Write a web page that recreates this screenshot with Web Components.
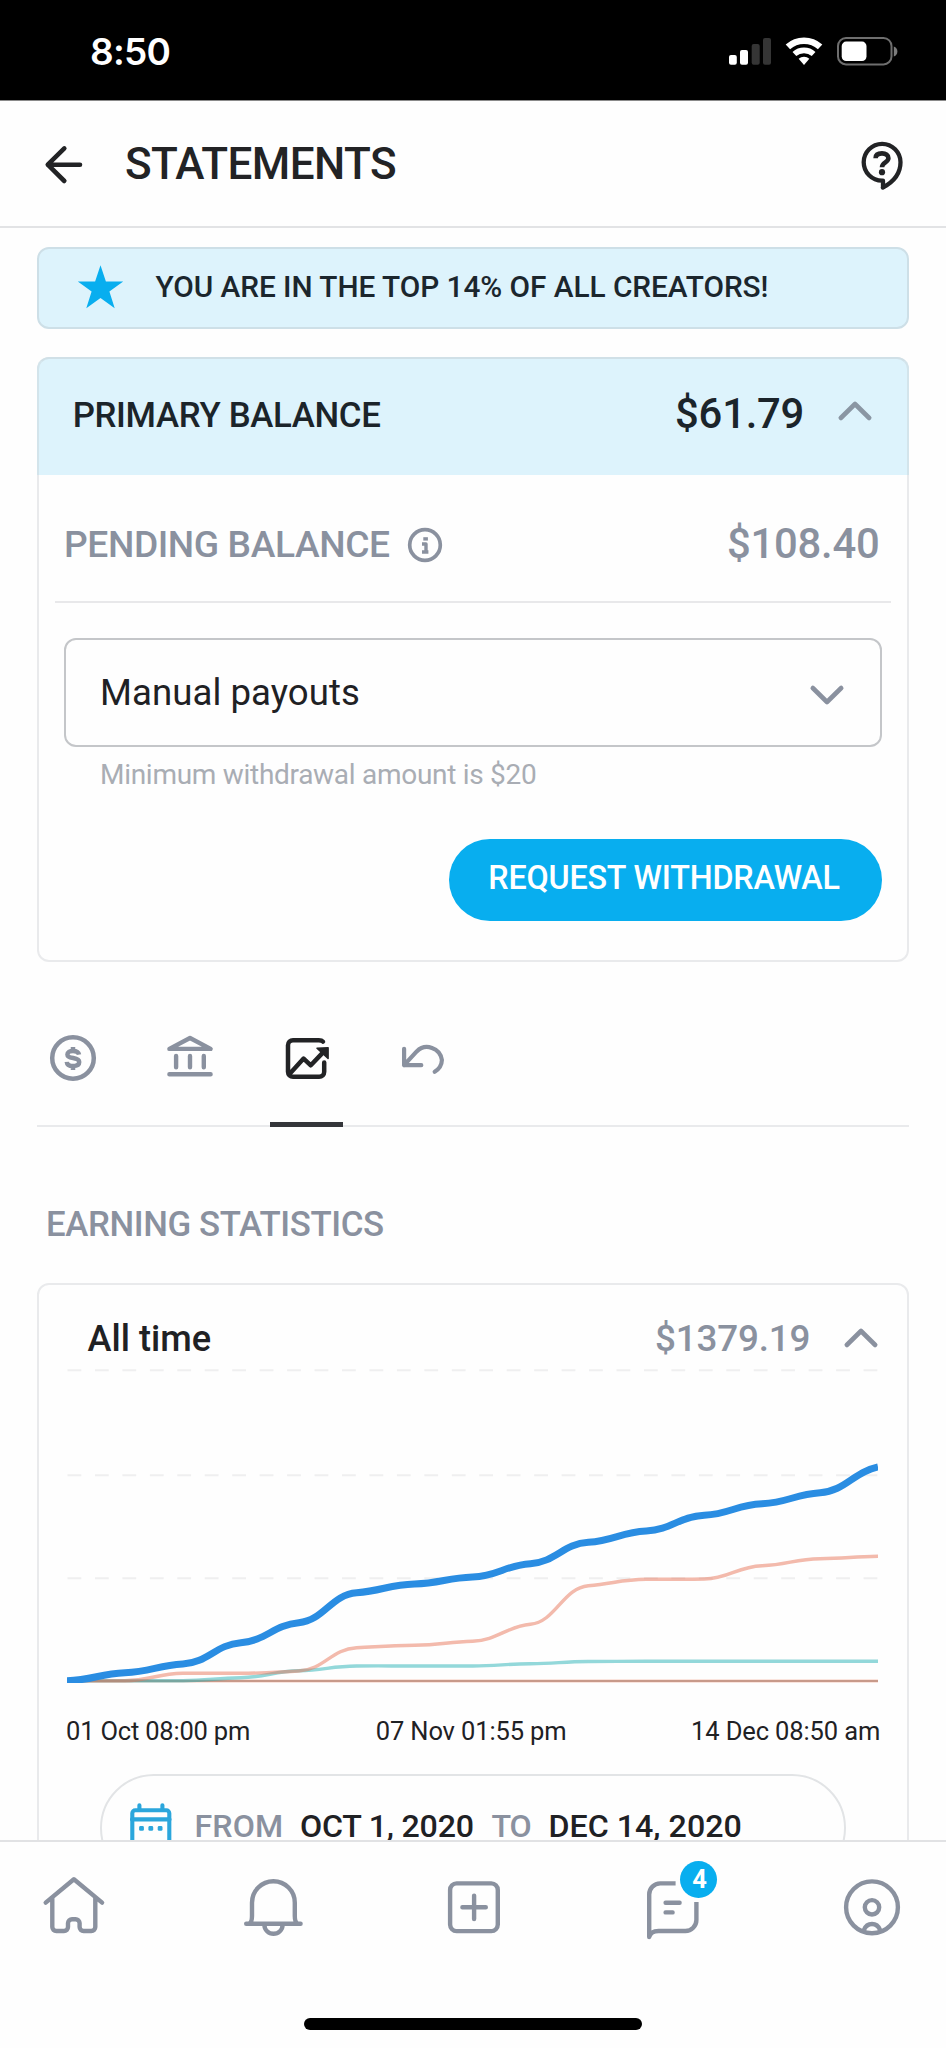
<!DOCTYPE html>
<html lang="en">
<head>
<meta charset="utf-8">
<title>Statements</title>
<style>
body{margin:0;background:#fefefe;font-family:Roboto,"Liberation Sans",sans-serif;color:#1f2124}
</style>
</head>
<body>
<statements-app></statements-app>
<script>
const define = (name, html, init) => {
  const t = document.createElement('template');
  t.innerHTML = html;
  customElements.define(name, class extends HTMLElement {
    constructor(){ super(); this.attachShadow({mode:'open'}).append(t.content.cloneNode(true)); }
    connectedCallback(){ if (init) init.call(this, this.shadowRoot); }
  });
};

/* A line of text whose letters are tracked so that its ink fills exactly `w` pixels. */
const ctx = document.createElement('canvas').getContext('2d');
define('track-text', `<style>:host{display:block;flex:none;white-space:pre;line-height:1.2}span{display:block}</style><span><slot></slot></span>`,
function(root){
  const s = this.getAttribute('size'), wt = this.getAttribute('weight') || 500;
  const fam = this.getAttribute('family') || 'Roboto', w = +this.getAttribute('w');
  const txt = this.textContent, span = root.querySelector('span');
  ctx.font = `${wt} ${s}px ${fam}`;
  const m = ctx.measureText(txt);
  const ink = m.actualBoundingBoxLeft + m.actualBoundingBoxRight;
  span.style.font = `${wt} ${s}px/1.2 ${fam}, "Liberation Sans", sans-serif`;
  if (txt.length > 1) span.style.letterSpacing = (w - ink) / (txt.length - 1) + 'px';
  span.style.marginLeft = m.actualBoundingBoxLeft + 'px';
  this.style.width = w + 'px';
});

/* Icons: [viewBox, stroke width, markup] */
const ICONS = {
  signal:['729 35 43 32',0,'<g fill="#fff" stroke="none"><rect x="729" y="55" width="7.8" height="9.8" rx="2"/><rect x="740" y="50" width="8" height="14.8" rx="2"/><g fill="#353535"><rect x="751.7" y="44" width="8" height="20.8" rx="2"/><rect x="763" y="38" width="8" height="26.8" rx="2"/></g></g>'],
  wifi:['784 35 40 32',6.6,'<g stroke-linecap="butt"><path d="M787.9 46.9A24 24 0 0 1 820.1 46.9"/><path stroke-width="5.6" d="M794.4 54A14.4 14.4 0 0 1 813.6 54"/></g><path fill="#fff" stroke="none" d="M798.65 58.8A8 8 0 0 1 809.35 58.8L804 64.9Z"/>'],
  battery:['836 35 63 32',2,'<rect x="838" y="38" width="53.5" height="26.4" rx="8" stroke="#6e6e6e"/><rect x="841.7" y="41.6" width="24.8" height="19.4" rx="4.5" fill="#fff" stroke="none"/><path d="M893.8 46.4q3.6 1.4 3.6 5t-3.6 5z" fill="#7c7c7c" stroke="none"/>'],
  back:['43 143 42 43',4.6,'<path d="M80 164.7H47.8M64.3 148.4L47.8 164.7 64.3 181"/>'],
  help:['858 138 48 56',4.3,'<path d="M882.8 187.6C893.5 182 900.5 174 900.5 162.3A18.4 18.4 0 1 0 882.1 180.7H883V187.6"/><path stroke-linecap="butt" stroke-width="4.6" d="M875.6 158.2C875.6 155 878.2 153.4 882 153.4S888.4 155.2 888.4 158.2C888.4 162.4 882 162.4 882 167.2"/><circle cx="882" cy="172.2" r="3.1" fill="currentColor" stroke="none"/>'],
  star:['77 263 47 46',0,'<path fill="#08aeef" stroke="none" d="M100.5 264.3L105.9 280.6H123.2L109.4 290.6 114.7 307.2 100.5 297.1 86.3 307.2 91.6 290.6 77.8 280.6H95.1Z"/>'],
  up:['0 0 36 24',4.6,'<path d="M3.8 18L18 4 32.2 18"/>'],
  down:['0 0 36 24',4.6,'<path d="M3.8 4L18 18 32.2 4"/>'],
  info:['407 526 36 36',3.7,'<circle cx="425" cy="544" r="15.3"/><path stroke-linecap="butt" stroke-width="3.4" d="M422 543H426V551M422 551H428.4"/><rect x="423.3" y="536.2" width="4.6" height="3.4" fill="currentColor" stroke="none"/>'],
  dollar:['48 1033 50 50',4.5,'<circle cx="73" cy="1058" r="20.8"/><path stroke-linecap="butt" d="M79 1054.6C78.6 1052 76.4 1050.9 73 1050.9 69.6 1050.9 67.4 1052.3 67.4 1054.4 67.4 1059.5 79.2 1056.6 79.2 1062 79.2 1064.6 76.6 1066 73 1066 69.2 1066 67 1064.5 66.8 1061.8M73 1047V1051M73 1066V1070"/>'],
  bank:['164.7 1033 50 50',4.4,'<path d="M169.1 1048.9L189.7 1038 210.3 1048.9ZM169.1 1074.3H210.3"/><path d="M175.8 1056V1067.3M189.7 1056V1067.3M203.5 1056V1067.3"/>'],
  chart:['281.2 1033 50 50',4.5,'<path d="M323.2 1041.6Q322 1040.2 319 1040.2H293.2A5 5 0 0 0 288.2 1045.2V1071.8A5 5 0 0 0 293.2 1076.8H319.4A5 5 0 0 0 324.4 1071.8V1062.6M290.2 1073.4L303.8 1058.6 311 1065.3 324 1051.6"/><path d="M317.2 1048.2L328.3 1047.7V1058.4Z" fill="currentColor" stroke-width="1.5"/>'],
  undo:['397.9 1033 50 50',4.2,'<path d="M404 1048.8V1065.2H421.2M404 1065.2L416.6 1051.4A14.9 14.9 0 0 1 441.8 1060Q441.6 1067.4 434.6 1071.8"/>'],
  calendar:['128 1801 46 52',4.1,'<rect x="132.3" y="1810.3" width="37" height="38" rx="3"/><path d="M132 1819.4H169.5M139.4 1805.3V1809M162.4 1805.3V1809"/><g fill="currentColor" stroke="none"><rect x="139.1" y="1826" width="4.8" height="4.8" rx="1.4"/><rect x="148.4" y="1826" width="4.8" height="4.8" rx="1.4"/><rect x="157.7" y="1826" width="4.8" height="4.8" rx="1.4"/></g>'],
  home:['38.5 1866 72 80',4.4,'<path d="M46.2 1902.6L74.4 1879.3 102.6 1902.6M52.8 1898V1927A4 4 0 0 0 56.8 1931H64.5A4 4 0 0 0 68.5 1927V1923A4 4 0 0 1 72.5 1919.2H76.1A4 4 0 0 1 80.1 1923V1927A4 4 0 0 0 84.1 1931H91.8A4 4 0 0 0 95.8 1927V1898"/>'],
  bell:['237.8 1866 72 80',4.4,'<path d="M246 1923.8H300.4M249.3 1923.4Q251.8 1922 251.8 1916V1902.7A21.4 21.4 0 0 1 294.6 1902.7V1916Q294.6 1922 297.1 1923.4M264.2 1925A9.1 8.8 0 0 0 282.4 1925"/>'],
  plus:['437.1 1866 72 80',4.4,'<rect x="450.2" y="1883.4" width="47.7" height="47.7" rx="6.5"/><path d="M462.5 1907.3H485.9M474.2 1895.6V1919"/>'],
  chat:['636.4 1866 72 80',4.4,'<path stroke-linecap="butt" d="M676 1883.4H660.6A11 11 0 0 0 649.6 1894.4V1937Q651 1931 659 1931H685.8A11 11 0 0 0 696.8 1920V1902"/><path d="M666 1902.8H680M666 1912.4H673"/>'],
  user:['835.7 1866 72 80',4.4,'<circle cx="871.7" cy="1907.3" r="25.9"/><circle cx="871.7" cy="1907.3" r="7.2"/><path d="M863.6 1930Q866 1924 871.7 1924T879.8 1930"/>']
};
define('line-icon', `<style>:host{display:block;flex:none}svg{display:block;fill:none;stroke:currentColor;stroke-linecap:round;stroke-linejoin:round}</style>`,
function(root){
  const [vb, sw, body] = ICONS[this.getAttribute('name')];
  const [, , w, h] = vb.split(' ');
  root.innerHTML += `<svg width="${w}" height="${h}" viewBox="${vb}" stroke-width="${sw}">${body}</svg>`;
});

define('status-bar', `<style>
:host{display:flex;box-sizing:border-box;height:100px;background:#000;border-bottom:1px solid #000;box-shadow:0 1px 0 #8a8a8a;color:#fff;padding:2px 47px 0 91px;align-items:center}
track-text{margin-top:3px}
.r{margin-left:auto;display:flex;gap:12px}</style>
<track-text family="Inter" weight="600" size="37" w="78.5">8:50</track-text>
<div class="r"><line-icon name="signal"></line-icon><line-icon name="wifi"></line-icon><line-icon name="battery"></line-icon></div>`);

define('page-header', `<style>
:host{display:flex;box-sizing:border-box;height:128px;border-bottom:2px solid #e2e3e5;padding:0 40px 0 43px;align-items:center;color:#222325}
track-text{margin:2px 0 0 41px}.b{margin-top:3px}.h{margin:6px 0 0 auto}</style>
<line-icon class="b" name="back"></line-icon><track-text size="44" w="265.5"><slot></slot></track-text><line-icon class="h" name="help"></line-icon>`.replace('<slot></slot>', 'STATEMENTS').replace('w="265.5"', 'w="270"'));

define('rank-banner', `<style>
:host{display:flex;box-sizing:border-box;height:82px;margin:19px 37px 0;border:2px solid #cddfe7;border-radius:12px;background:#ddf3fc;padding-left:38px;align-items:center;color:#1b262d}
line-icon{margin-top:-3px}track-text{margin:-2px 0 0 31.5px}</style>
<line-icon name="star"></line-icon><track-text size="29.8" w="613.5">YOU ARE IN THE TOP 14% OF ALL CREATORS!</track-text>`);

define('balance-card', `<style>
:host{display:block;box-sizing:border-box;height:605px;margin:28px 37px 0;border-radius:12px;box-shadow:inset 0 0 0 2px #e9eaec}
.row{display:flex;align-items:center;box-sizing:border-box}
.head{height:118px;background:#ddf3fc;border:2px solid #d0e0e7;border-bottom:0;border-left-color:#d3e4eb;border-right-color:#d3e4eb;border-radius:12px 12px 0 0;padding:0 34.5px 0 35.7px;color:#1b242a}
.head .p{margin-top:-2px}
.amt{margin:-5px 34px 0 auto}.head line-icon{color:#8a96a3;margin-top:-10px}
.pend{height:128px;margin:0 18px;padding:13px 13px 0 11px;border-bottom:2px solid #e8e8ea;color:#8a919f}
.pend line-icon{margin-left:18px}.pend .a{margin-left:auto;margin-top:-1px}
.sel{height:109px;margin:35px 27px 0;border:2px solid #c4c6c9;border-radius:12px;padding:0 34.7px 0 37px}
.sel track-text{margin-top:0}
.sel line-icon{margin-left:auto;color:#8a919f;margin-top:6px}
.note{color:#a9adb4;margin:11px 0 0 65px}
.act{justify-content:flex-end;margin:47.5px 27px 0}
button{all:unset;box-sizing:border-box;display:flex;align-items:center;justify-content:center;width:433.5px;height:82px;border-radius:41px;background:#08aeef;color:#fff;padding-bottom:3px}
</style>
<div class="row head"><track-text class="p" size="34.8" w="305.5">PRIMARY BALANCE</track-text><track-text class="amt" size="41.8" w="125.4">$61.79</track-text><line-icon name="up"></line-icon></div>
<div class="row pend"><track-text size="37.2" w="323">PENDING BALANCE</track-text><line-icon name="info"></line-icon><track-text class="a" size="41.8" w="149">$108.40</track-text></div>
<div class="row sel"><track-text size="36.6" weight="400" w="256">Manual payouts</track-text><line-icon name="down"></line-icon></div>
<track-text class="note" size="28" weight="400" w="434">Minimum withdrawal amount is $20</track-text>
<div class="row act"><button><track-text size="32.3" w="350">REQUEST WITHDRAWAL</track-text></button></div>`);

define('statement-tabs', `<style>
:host{display:flex;box-sizing:border-box;height:165px;margin:0 37px;gap:43.6px;border-bottom:2px solid #e9eaec;color:#8a919f;align-items:stretch}
div{width:73px;display:flex;justify-content:center;padding:71px .8px 0 0;box-sizing:border-box;flex:none;margin-bottom:-2px}
.on{color:#222325;border-bottom:5px solid #34363a}</style>
<div><line-icon name="dollar"></line-icon></div><div><line-icon name="bank"></line-icon></div><div class="on"><line-icon name="chart"></line-icon></div><div><line-icon name="undo"></line-icon></div>`);

define('earnings-chart', `<style>:host{display:block}svg{display:block}</style>`, function(root){
  const n = 15, dx = 811 / 14;
  const total = [1680.7,1672.7,1664,1642.7,1622.7,1592.7,1584,1577,1563.7,1542.3,1531,1515.3,1503.7,1492.7,1467];
  const tips = [1680.7,1680.7,1673.3,1673.3,1671,1647.7,1645.3,1641.2,1624.3,1585.7,1579.3,1579,1565.7,1558.7,1556.3];
  const subs = [1680.7,1680.7,1680.7,1677.7,1670.7,1666,1666,1666,1663.7,1661.5,1661.3,1661.3,1661.3,1661.3,1661.3];
  const curve = y => {
    const m = y.map((v,i) => i && i < n-1 ? .22*(y[i+1]-y[i-1])/(2*dx) : (i ? .5*(y[i]-y[i-1])/dx : .1*(y[1]-y[0])/dx));
    let d = `M67 ${y[0]}`;
    for (let i = 1; i < n; i++) {
      const a = 67+dx*(i-1), b = 67+dx*i, h = dx*.44;
      d += `C${a+h} ${y[i-1]+m[i-1]*h} ${b-h} ${y[i]-m[i]*h} ${b} ${y[i]}`;
    }
    return d;
  };
  root.innerHTML += `<svg width="811" height="315" viewBox="67 1368 811 315" fill="none">
    <path d="M67.5 1370.2H878M67.5 1475.3H878M67.5 1578.3H878" stroke="#efeff0" stroke-width="2" stroke-dasharray="13.8 13.65"/>
    <path d="M67 1681H878" stroke="#f5c9bb" stroke-width="3"/><path d="M67 1681H878" stroke="#b98a7a" stroke-width="1.3"/>
    <path d="${curve(subs)}" stroke="#27b1b5" stroke-opacity=".5" stroke-width="3.4"/>
    <path d="${curve(tips)}" stroke="#e8765a" stroke-opacity=".5" stroke-width="3.4"/>
    <path d="${curve(total)}" stroke="#2a8de2" stroke-width="7"/></svg>`;
});

define('earnings-card', `<style>
:host{display:block;box-sizing:border-box;height:640px;margin:0 37px;border:2px solid #e9eaec;border-radius:12px}
.head{display:flex;align-items:center;height:83px;box-sizing:border-box;padding:25px 28px 0 48.5px}
.head .a{margin-left:auto;color:#8a919f}.head line-icon{margin-left:34.5px;color:#8a919f}
earnings-chart{margin-left:28px}
.dates{display:flex;justify-content:space-between;margin:33.5px 28px 0 28px}
.range{display:flex;align-items:center;box-sizing:border-box;width:746px;height:108px;margin:27px 0 0 61px;border:2px solid #e2e4e6;border-radius:54px;padding:0 0 2px 25.5px}
.range line-icon{color:#2ba6dc;margin-top:0;margin-right:23px}.range track-text{margin-top:-1.5px}.g{color:#8a919f}.m{margin:0 18px 0 20px}</style>
<div class="head"><track-text size="36.2" w="123.2">All time</track-text><track-text class="a" size="36.8" w="152.5">$1379.19</track-text><line-icon name="up"></line-icon></div>
<earnings-chart></earnings-chart>
<div class="dates"><track-text size="25.5" weight="400" w="182">01 Oct 08:00 pm</track-text><track-text size="25.5" weight="400" w="188.5">07 Nov 01:55 pm</track-text><track-text size="25.5" weight="400" w="186">14 Dec 08:50 am</track-text></div>
<div class="range"><line-icon name="calendar"></line-icon><track-text class="g" size="32.2" w="84.5">FROM</track-text><track-text class="m" size="32.2" w="172.5">OCT 1, 2020</track-text><track-text class="g" size="32.2" w="39">TO</track-text><track-text class="m" size="32.2" w="190">DEC 14, 2020</track-text></div>`);

define('bottom-nav', `<style>
:host{display:block;box-sizing:border-box;height:208px;border-top:2px solid #e1e2e4;background:#fefefe}
nav{display:flex;justify-content:space-between;padding:24px 38.3px 0 38.4px;color:#8a919f}
.c{position:relative}.n{position:absolute;left:44px;top:-5.5px;width:37px;height:37px;border-radius:50%;background:#08aeef;color:#fff;display:flex;align-items:center;justify-content:center}
i{display:block;width:338px;height:12px;border-radius:6px;background:#000;margin:72px 0 0 304px}</style>
<nav><line-icon name="home"></line-icon><line-icon name="bell"></line-icon><line-icon name="plus"></line-icon><div class="c"><line-icon name="chat"></line-icon><div class="n"><track-text size="25.5" weight="700" w="13.5">4</track-text></div></div><line-icon name="user"></line-icon></nav><i></i>`);

define('statements-app', `<style>
:host{display:flex;flex-direction:column;height:2048px;overflow:hidden}
status-bar,page-header,bottom-nav{flex:none}
main{flex:1;min-height:0;overflow:hidden;display:flow-root}
.t{color:#8a919f;margin:77px 0 37px 48px}</style>
<status-bar></status-bar><page-header></page-header>
<main><rank-banner></rank-banner><balance-card></balance-card><statement-tabs></statement-tabs>
<track-text class="t" size="34.8" w="335">EARNING STATISTICS</track-text><earnings-card></earnings-card></main>
<bottom-nav></bottom-nav>`);
</script>
</body>
</html>
